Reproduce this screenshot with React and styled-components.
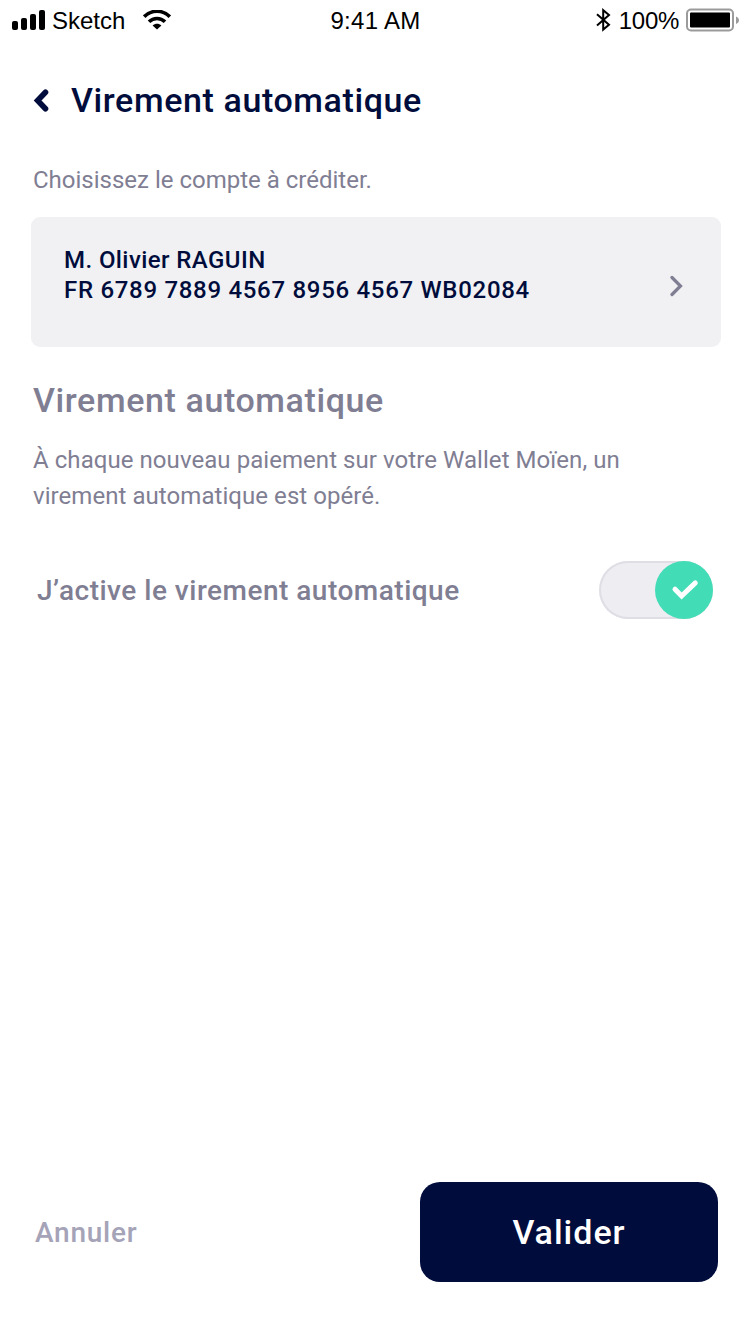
import React from 'react';
import styled, { createGlobalStyle } from 'styled-components';

const navy = '#000c3b';
const slate = '#7f7e93';

const GlobalStyle = createGlobalStyle`
  * { box-sizing: border-box; }
  body { margin: 0; background: #fff; }
`;

const Screen = styled.div`
  width: 750px;
  height: 1334px;
  background: #fff;
  display: flex;
  flex-direction: column;
  font-family: Roboto, 'Noto Sans', sans-serif;
  color: ${slate};
`;

const StatusBar = styled.header`
  height: 40px;
  flex: none;
  display: grid;
  grid-template-columns: 1fr auto 1fr;
  align-items: center;
  padding: 0 11px 0 12px;
  font: 24px/40px 'Liberation Sans', Arial, sans-serif;
  color: #000;
`;

const StatusGroup = styled.div`
  display: flex;
  align-items: center;
  justify-content: ${(p) => (p.$end ? 'flex-end' : 'flex-start')};
`;

const StatusText = styled.span`
  letter-spacing: ${(p) => p.$spacing || 0}px;
  margin: ${(p) => p.$margin || 0};
  white-space: nowrap;
  line-height: 38px;
  padding-top: 2px;
`;

const Glyph = styled.svg`
  display: block;
  flex: none;
  margin: ${(p) => p.$margin || 0};
`;

const TitleBar = styled.div`
  height: 120px;
  flex: none;
  display: flex;
  align-items: center;
  padding: 0 0 0 33px;
`;

const BackButton = styled.button`
  border: 0;
  padding: 0;
  width: 38px;
  background: none;
  display: flex;
`;

const Text = styled.p`
  margin: 0;
  white-space: pre-line;
  font-size: ${(p) => p.$size}px;
  line-height: ${(p) => p.$line}px;
  font-weight: ${(p) => p.$weight || 400};
  letter-spacing: ${(p) => p.$spacing || 0}px;
  color: ${(p) => p.$color || slate};
`;

const Content = styled.main`
  flex: 1;
  padding: 2px 29px 0 31px;
`;

const Copy = styled.section`
  padding: ${(p) => p.$pad};
`;

const Description = styled(Text)`
  margin-top: 22px;
`;

const AccountCard = styled.div`
  height: 130px;
  border-radius: 9px;
  background: #f1f1f4;
  display: flex;
  align-items: center;
  justify-content: space-between;
  padding: 0 38px 14px 33px;
`;

const ToggleRow = styled.div`
  display: flex;
  align-items: center;
  justify-content: space-between;
  height: 58px;
  padding: 0 8px 0 6px;
  margin-top: 47px;
`;

const ToggleLabel = styled(Text)`
  padding-top: 2px;
`;

const Switch = styled.div`
  width: 114px;
  height: 58px;
  border-radius: 29px;
  background: #eeedf2;
  box-shadow: inset 0 0 0 2px #dfdee5;
  display: flex;
  justify-content: flex-end;
`;

const Knob = styled.div`
  width: 58px;
  height: 58px;
  border-radius: 50%;
  background: #42dcb7;
  display: flex;
  align-items: center;
  justify-content: center;
`;

const Footer = styled.footer`
  flex: none;
  display: flex;
  align-items: center;
  justify-content: space-between;
  padding: 0 32px 52px 35px;
`;

const PlainButton = styled.button`
  border: 0;
  padding: 2px 0 0;
  background: none;
  font: 500 28px/40px Roboto, sans-serif;
  letter-spacing: 0.75px;
  color: #a5a3b8;
`;

const PrimaryButton = styled.button`
  width: 298px;
  height: 100px;
  border: 0;
  border-radius: 20px;
  padding: 0;
  background: ${navy};
  color: #fff;
  font: 500 34px/40px Roboto, sans-serif;
  letter-spacing: 1px;
`;

export default function App() {
  return (
    <Screen>
      <GlobalStyle />
      <StatusBar>
        <StatusGroup>
          <Glyph width="33" height="20" viewBox="0 0 33 20">
            <rect x="0" y="11" width="6" height="9" rx="2" />
            <rect x="9" y="8" width="6" height="12" rx="2" />
            <rect x="18" y="4" width="6" height="16" rx="2" />
            <rect x="27" y="0" width="6" height="20" rx="2" />
          </Glyph>
          <StatusText $margin="0 0 0 7px">Sketch</StatusText>
          <Glyph width="28" height="20" viewBox="0 0 28 20" $margin="0 0 0 18px" fill="none" stroke="#000">
            <path d="M1.2 6.6C8.4-.5 19.6-.5 26.8 6.6" strokeWidth="3.6" />
            <path d="M6 11.8c4.5-4.4 11.5-4.4 16 0" strokeWidth="3.6" />
            <path d="M9.6 15.4c2.6-2.3 6.2-2.3 8.8 0L14 19.6z" fill="#000" stroke="none" />
          </Glyph>
        </StatusGroup>
        <StatusText $spacing={0.3}>9:41 AM</StatusText>
        <StatusGroup $end>
          <Glyph width="15" height="24" viewBox="0 0 15 24" fill="none" stroke="#000" strokeWidth="2">
            <path d="M1 6.3 13 16.8 7.2 21.6V2.2L13 7 1 17.5" />
          </Glyph>
          <StatusText $margin="0 7px 0 8px" $spacing={-0.3}>100%</StatusText>
          <Glyph width="53" height="24" viewBox="0 0 53 24">
            <rect x="1" y="1.5" width="46" height="21" rx="4" fill="none" stroke="#9b9b9b" strokeWidth="2" />
            <rect x="4" y="4.5" width="40" height="15" rx="1" />
            <path d="M50 8.5c4 1.5 4 6 0 7.5z" fill="#9b9b9b" />
          </Glyph>
        </StatusGroup>
      </StatusBar>
      <TitleBar>
        <BackButton aria-label="Retour">
          <Glyph width="16" height="23" viewBox="0 0 16 23" fill="none" stroke={navy} strokeWidth="5.6" strokeLinecap="round">
            <path d="M12.5 3.2 4.6 11.500 12.5 19.800" />
          </Glyph>
        </BackButton>
        <Text as="h1" $size={34} $line={40} $weight={500} $spacing={0.6} $color={navy}>Virement automatique</Text>
      </TitleBar>
      <Content>
        <Copy $pad="0 0 19px 2px">
          <Text $size={24} $line={36}>Choisissez le compte à créditer.</Text>
        </Copy>
        <AccountCard>
          <div>
            <Text $size={24} $line={30} $weight={500} $spacing={0.42} $color={navy}>M. Olivier RAGUIN</Text>
            <Text $size={24} $line={30} $weight={500} $spacing={0.7} $color={navy}>FR 6789 7889 4567 8956 4567 WB02084</Text>
          </div>
          <Glyph width="13" height="22" viewBox="0 0 13 22" fill="none" stroke={slate} strokeWidth="3.2" strokeLinecap="round" $margin="22px 0 0">
            <path d="M2 2.5 10.5 11 2 19.5" />
          </Glyph>
        </AccountCard>
        <Copy $pad="33px 0 0 2px">
          <Text as="h2" $size={34} $line={40} $weight={500} $spacing={0.6}>Virement automatique</Text>
          <Description $size={24} $line={36} $spacing={0.06}>{'À chaque nouveau paiement sur votre Wallet Moïen, un\nvirement automatique est opéré.'}</Description>
        </Copy>
        <ToggleRow>
          <ToggleLabel $size={28} $line={40} $weight={500} $spacing={0.5}>J’active le virement automatique</ToggleLabel>
          <Switch role="switch" aria-checked="true">
            <Knob>
              <Glyph width="28" height="22" viewBox="0 0 28 22" fill="none" stroke="#fff" strokeWidth="5" strokeLinecap="round" $margin="0 0 0 2px">
                <path d="M4 10.200 10.600 17 24.300 3.900" />
              </Glyph>
            </Knob>
          </Switch>
        </ToggleRow>
      </Content>
      <Footer>
        <PlainButton>Annuler</PlainButton>
        <PrimaryButton>Valider</PrimaryButton>
      </Footer>
    </Screen>
  );
}
